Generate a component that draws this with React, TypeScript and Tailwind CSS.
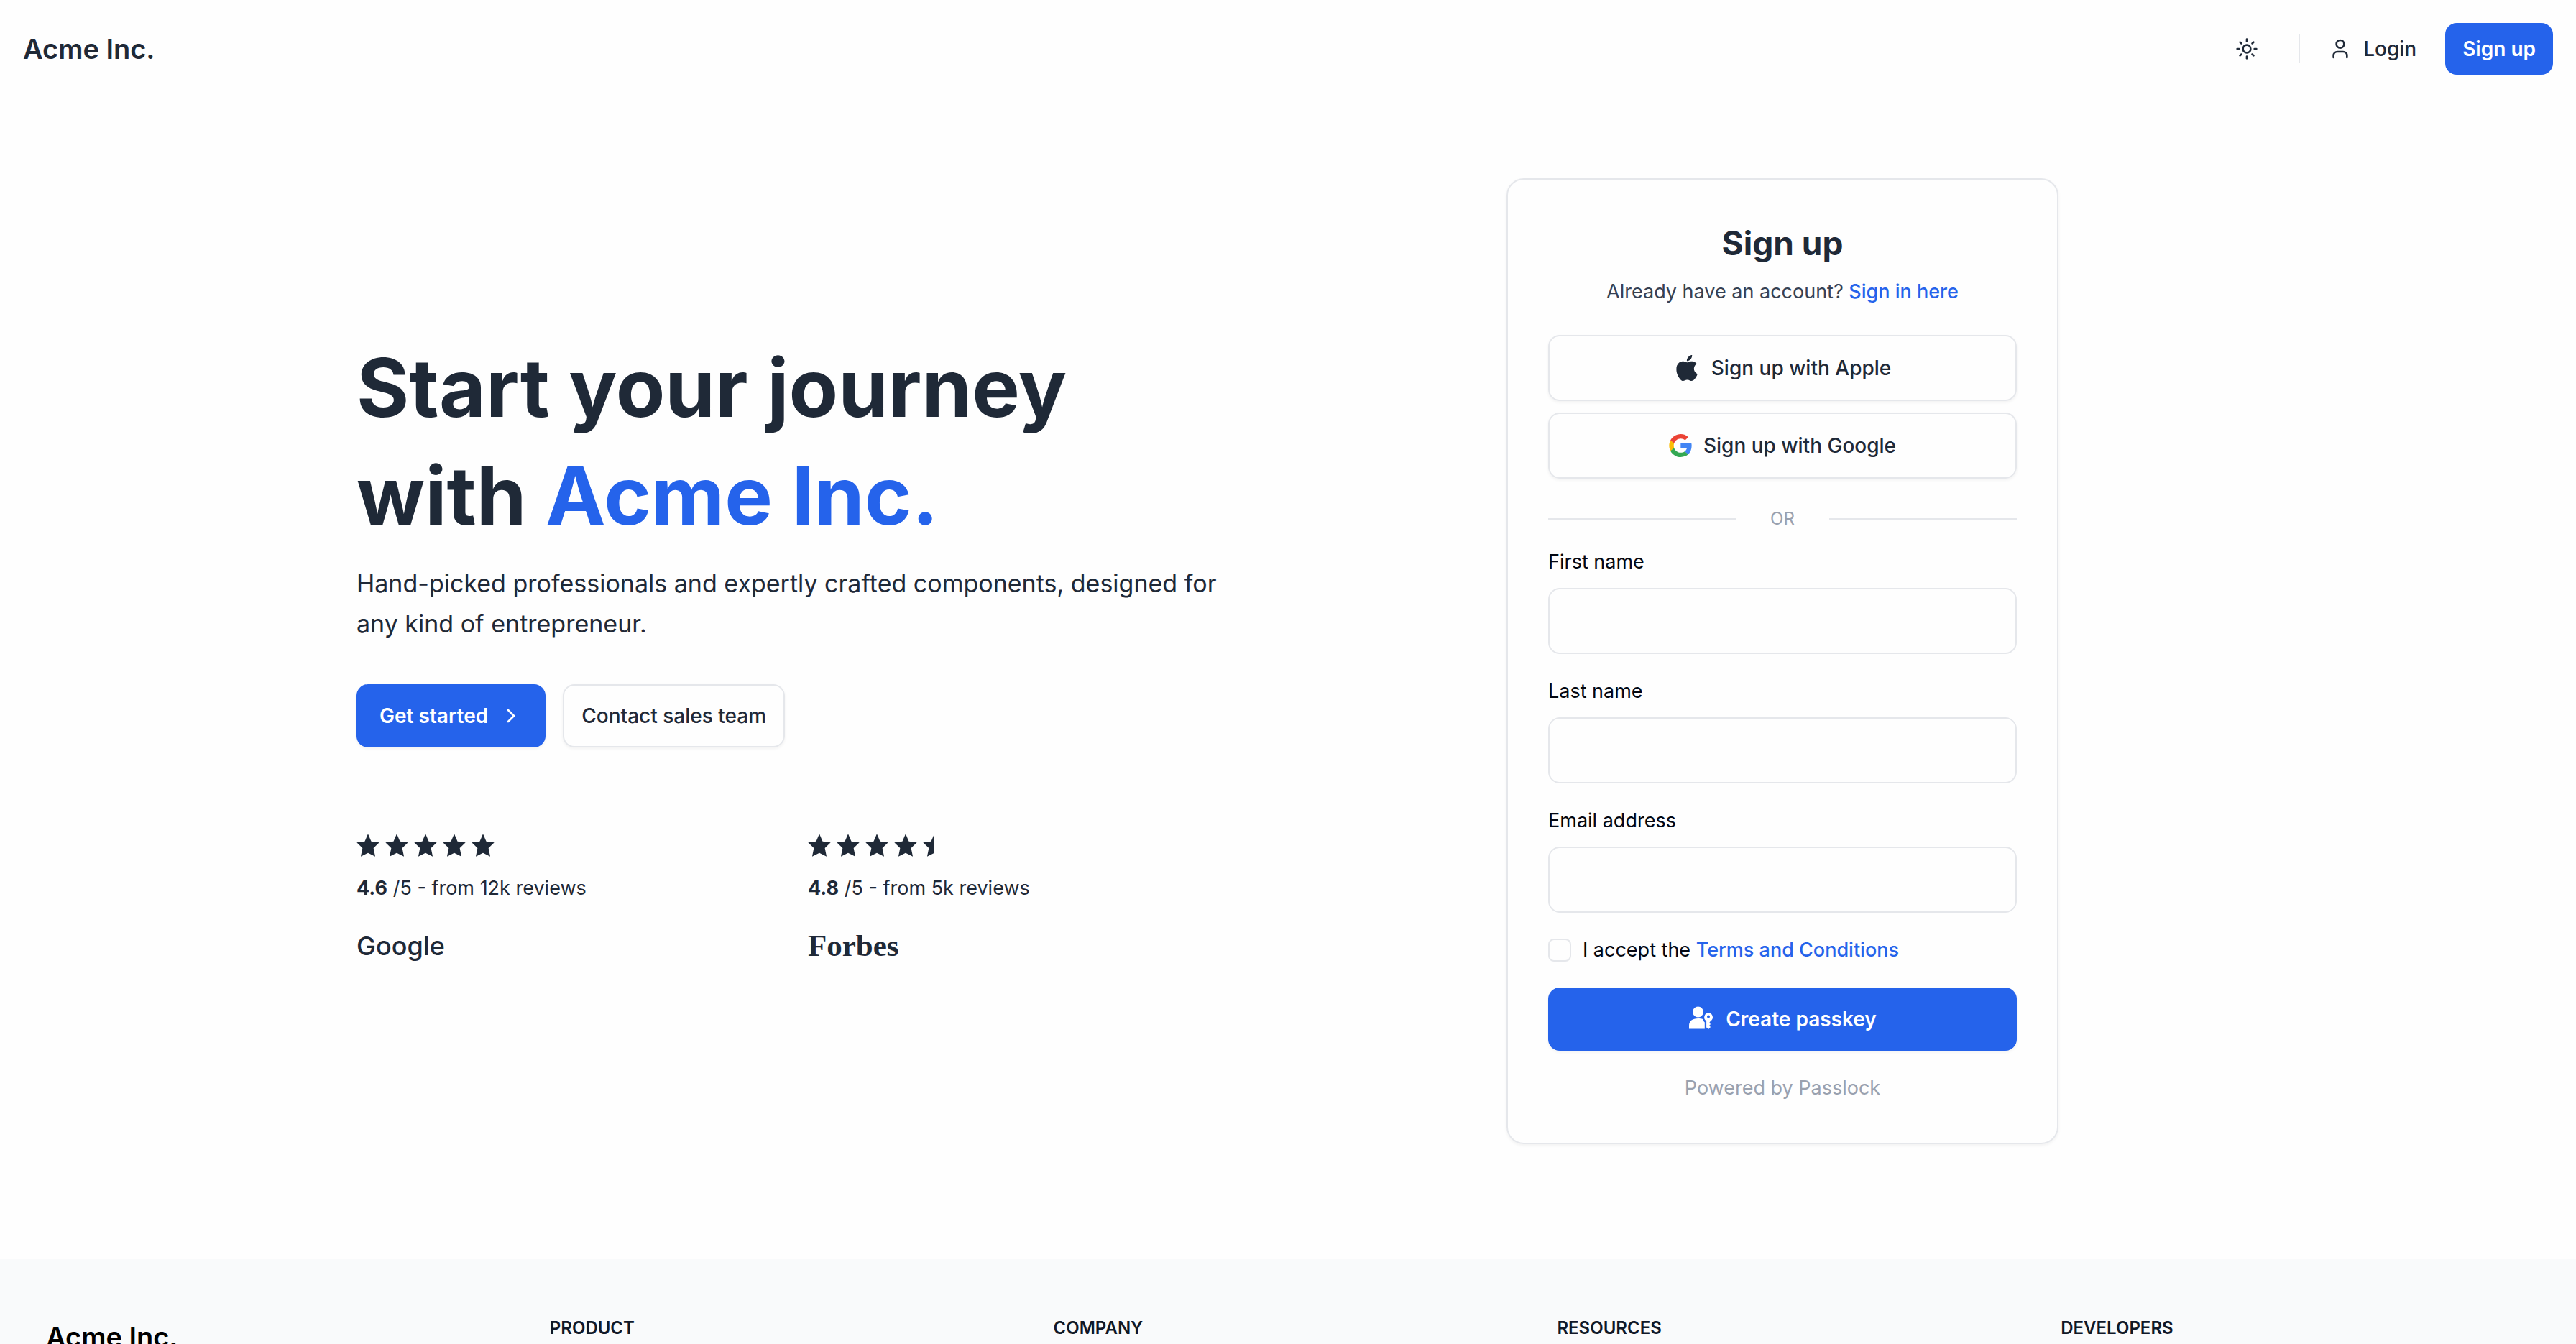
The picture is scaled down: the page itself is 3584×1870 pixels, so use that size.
import type { ReactNode } from "react";
import { ChevronRight, Sun, User } from "lucide-react";

const footerColumns = ["Product", "Company", "Resources", "Developers"];

function AppleIcon() {
  return (
    <svg viewBox="0 0 16 16" className="size-9" fill="currentColor" aria-hidden="true">
      <path d="M11.182.008C11.148-.03 9.923.023 8.857 1.18c-1.066 1.156-.902 2.482-.878 2.516s1.52.087 2.475-1.258.762-2.391.728-2.43m3.314 11.733c-.048-.096-2.325-1.234-2.113-3.422s1.675-2.789 1.698-2.854-.597-.79-1.254-1.157a3.7 3.7 0 0 0-1.563-.434c-.108-.003-.483-.095-1.254.116-.508.139-1.653.589-1.968.607-.316.018-1.256-.522-2.267-.665-.647-.125-1.333.131-1.824.328-.49.196-1.422.754-2.074 2.237-.652 1.482-.311 3.83-.067 4.56s.625 1.924 1.273 2.796c.576.984 1.34 1.667 1.659 1.899s1.219.386 1.843.067c.502-.308 1.408-.485 1.766-.472.357.013 1.061.154 1.782.539.571.197 1.111.115 1.652-.105.541-.221 1.324-1.059 2.238-2.758q.52-1.185.473-1.282" />
    </svg>
  );
}

function GoogleIcon() {
  return (
    <svg viewBox="0 0 46 47" className="size-8" fill="none" aria-hidden="true">
      <path d="M46 24.0287C46 22.09 45.8533 20.68 45.5013 19.2112H23.4694V27.9356H36.4069C36.1429 30.1094 34.7347 33.37 31.5957 35.5731L31.5663 35.8669L38.5191 41.2719L38.9885 41.3306C43.4477 37.2181 46 31.1669 46 24.0287Z" fill="#4285F4" />
      <path d="M23.4694 47C29.8061 47 35.1161 44.9144 39.0179 41.3012L31.625 35.5437C29.6301 36.9244 26.9898 37.8937 23.4987 37.8937C17.2793 37.8937 12.0281 33.7812 10.1505 28.1412L9.88649 28.1706L2.61097 33.7812L2.52296 34.0456C6.36608 41.7125 14.287 47 23.4694 47Z" fill="#34A853" />
      <path d="M10.1212 28.1413C9.62245 26.6725 9.32908 25.1156 9.32908 23.5C9.32908 21.8844 9.62245 20.3275 10.0918 18.8588V18.5356L2.75765 12.8369L2.52296 12.9544C0.909439 16.1269 0 19.7106 0 23.5C0 27.2894 0.909439 30.8731 2.49362 34.0456L10.1212 28.1413Z" fill="#FBBC05" />
      <path d="M23.4694 9.07688C27.8699 9.07688 30.8622 10.9863 32.5344 12.5725L39.1645 6.11C35.0867 2.32063 29.8061 0 23.4694 0C14.287 0 6.36607 5.2875 2.49362 12.9544L10.0918 18.8588C11.9987 13.1894 17.25 9.07688 23.4694 9.07688Z" fill="#EB4335" />
    </svg>
  );
}

function PasskeyIcon() {
  return (
    <svg viewBox="0 0 36 36" className="size-9" fill="currentColor" aria-hidden="true">
      <circle cx="13.500" cy="8" r="7.500" />
      <path d="M1 31.500v-4.500C1 20.500 6 17 13.500 17c2.600 0 4.900.3 6.700 1.100.3 1.800 1.200 3.300 2.600 4.400v9Z" />
      <path
        fillRule="evenodd"
        d="M28 9.500a5.900 5.900 0 0 0-2.900 11v8.900l2.900 2.600 3-3-1.900-2 1.900-2-1.700-2 1.700-2.500A5.900 5.900 0 0 0 28 9.500Zm0 3a2 2 0 1 1 0 4 2 2 0 0 1 0-4Z"
      />
    </svg>
  );
}

function Star({ half = false }: { half?: boolean }) {
  return (
    <svg viewBox="0 0 51 51" className="size-8" fill="currentColor" aria-hidden="true">
      <path
        d={
          half
            ? "M25.500 .500V42.500L9.500 50.500 13.300 32 .500 19.500 18.300 17Z"
            : "M25.500 .500 32.700 17 50.500 19.500 37.700 32 41.500 50.500 25.500 42.500 9.500 50.500 13.300 32 .500 19.500 18.300 17Z"
        }
      />
    </svg>
  );
}

function Review({ score, count, half, children }: { score: string; count: string; half?: boolean; children: ReactNode }) {
  return (
    <div className="py-10">
      <div className="flex gap-2">
        <Star />
        <Star />
        <Star />
        <Star />
        <Star half={half} />
      </div>
      <p className="mt-6 text-[27px] leading-10">
        <span className="font-bold">{score}</span> /5 - from {count} reviews
      </p>
      <div className="mt-10 h-11 leading-10">{children}</div>
    </div>
  );
}

function Field({ id, label, type = "text" }: { id: string; label: string; type?: string }) {
  return (
    <div>
      <label htmlFor={id} className="block text-[27px] leading-10 text-gray-950">
        {label}
      </label>
      <input id={id} name={id} type={type} className="mt-4 block h-[92px] w-full rounded-2xl border-2 border-gray-200 px-6 text-[27px]" />
    </div>
  );
}

const socialButton =
  "flex h-[92px] w-full items-center justify-center gap-4 rounded-2xl border-2 border-gray-200 text-[28px] font-medium shadow-[0_2px_4px_rgba(0,0,0,0.05)]";

export default function App() {
  return (
    <div className="min-h-screen bg-[#fefefe] font-['Inter',sans-serif] text-[#1f2937]">
      <header className="flex items-center justify-between px-8 py-8">
        <a href="#" className="text-[38px] leading-[56px] font-semibold">
          Acme Inc.
        </a>
        <nav className="flex items-center">
          <button type="button" aria-label="Toggle theme" className="mr-14">
            <Sun className="size-8" />
          </button>
          <a href="#login" className="flex h-10 items-center gap-4 border-l-2 border-gray-200 pl-10 text-[28px] font-medium">
            <User className="size-8" />
            Login
          </a>
          <a href="#signup" className="ml-10 flex h-[72px] items-center rounded-2xl bg-[#2563eb] px-6 text-[28px] font-semibold text-white">
            Sign up
          </a>
        </nav>
      </header>

      <main className="mx-auto grid max-w-[2720px] grid-cols-2 items-center gap-40 px-16 pt-28 pb-40">
        <section>
          <h1 className="pt-1 text-[112px] leading-[150px] font-bold">
            Start your journey
            <br />
            with <span className="text-[#2563eb]">Acme Inc.</span>
          </h1>
          <p className="mt-5 text-[34px] leading-[56px]">
            Hand-picked professionals and expertly crafted components, designed for any kind of entrepreneur.
          </p>
          <div className="mt-14 flex gap-6">
            <a href="#start" className="flex h-[88px] items-center gap-4 rounded-2xl bg-[#2563eb] px-8 text-[28px] font-semibold text-white shadow-[0_2px_4px_rgba(0,0,0,0.05)]">
              Get started
              <ChevronRight className="size-8" />
            </a>
            <a href="#sales" className="flex h-[88px] items-center rounded-2xl border-2 border-gray-200 px-6 text-[28px] font-medium shadow-[0_2px_4px_rgba(0,0,0,0.05)]">
              Contact sales team
            </a>
          </div>
          <div className="mt-20 grid grid-cols-2 gap-10">
            <Review score="4.6" count="12k">
              <span className="text-[36px] font-medium">Google</span>
            </Review>
            <Review score="4.8" count="5k" half>
              <span className="font-['Liberation_Serif',serif] text-[43px] font-bold">Forbes</span>
            </Review>
          </div>
        </section>

        <section id="signup" className="mx-auto w-full max-w-3xl rounded-3xl border-2 border-gray-200 p-14 shadow-[0_2px_4px_rgba(0,0,0,0.05)]">
          <div className="text-center">
            <h2 className="text-[46px] leading-[64px] font-bold">Sign up</h2>
            <p className="mt-4 text-[27px] leading-10 text-gray-700">
              Already have an account?{" "}
              <a href="#signin" className="font-medium text-[#2563eb]">
                Sign in here
              </a>
            </p>
          </div>
          <div className="mt-10 grid gap-4">
            <button type="button" className={socialButton}>
              <AppleIcon />
              Sign up with Apple
            </button>
            <button type="button" className={socialButton}>
              <GoogleIcon />
              Sign up with Google
            </button>
          </div>
          <div className="mt-4 flex items-center py-6 text-[24px] leading-8 text-gray-400">
            <span className="mr-12 h-0.5 flex-1 bg-gray-200" />
            OR
            <span className="ml-12 h-0.5 flex-1 bg-gray-200" />
          </div>
          <form className="grid gap-8">
            <Field id="firstName" label="First name" />
            <Field id="lastName" label="Last name" />
            <Field id="email" label="Email address" type="email" />
            <div className="flex items-center gap-4 text-[27px] leading-10 text-gray-950">
              <input id="terms" type="checkbox" className="size-8 appearance-none rounded-lg border-2 border-gray-200 checked:bg-[#2563eb]" />
              <label htmlFor="terms">
                I accept the{" "}
                <a href="#terms" className="font-medium text-[#2563eb]">
                  Terms and Conditions
                </a>
              </label>
            </div>
            <button type="submit" className="flex h-[88px] items-center justify-center gap-4 rounded-2xl bg-[#2563eb] text-[28px] font-semibold text-white shadow-[0_2px_4px_rgba(0,0,0,0.05)]">
              <PasskeyIcon />
              Create passkey
            </button>
            <p className="text-center text-[27px] leading-10 text-gray-400">Powered by Passlock</p>
          </form>
        </section>
      </main>

      <footer className="grid grid-cols-5 gap-12 bg-gray-50 px-16 py-20">
        <a href="#" className="text-[38px] leading-[56px] font-semibold text-black">
          Acme Inc.
        </a>
        {footerColumns.map((name) => (
          <h4 key={name} className="text-[24px] leading-8 font-semibold text-gray-900 uppercase">
            {name}
          </h4>
        ))}
      </footer>
    </div>
  );
}
